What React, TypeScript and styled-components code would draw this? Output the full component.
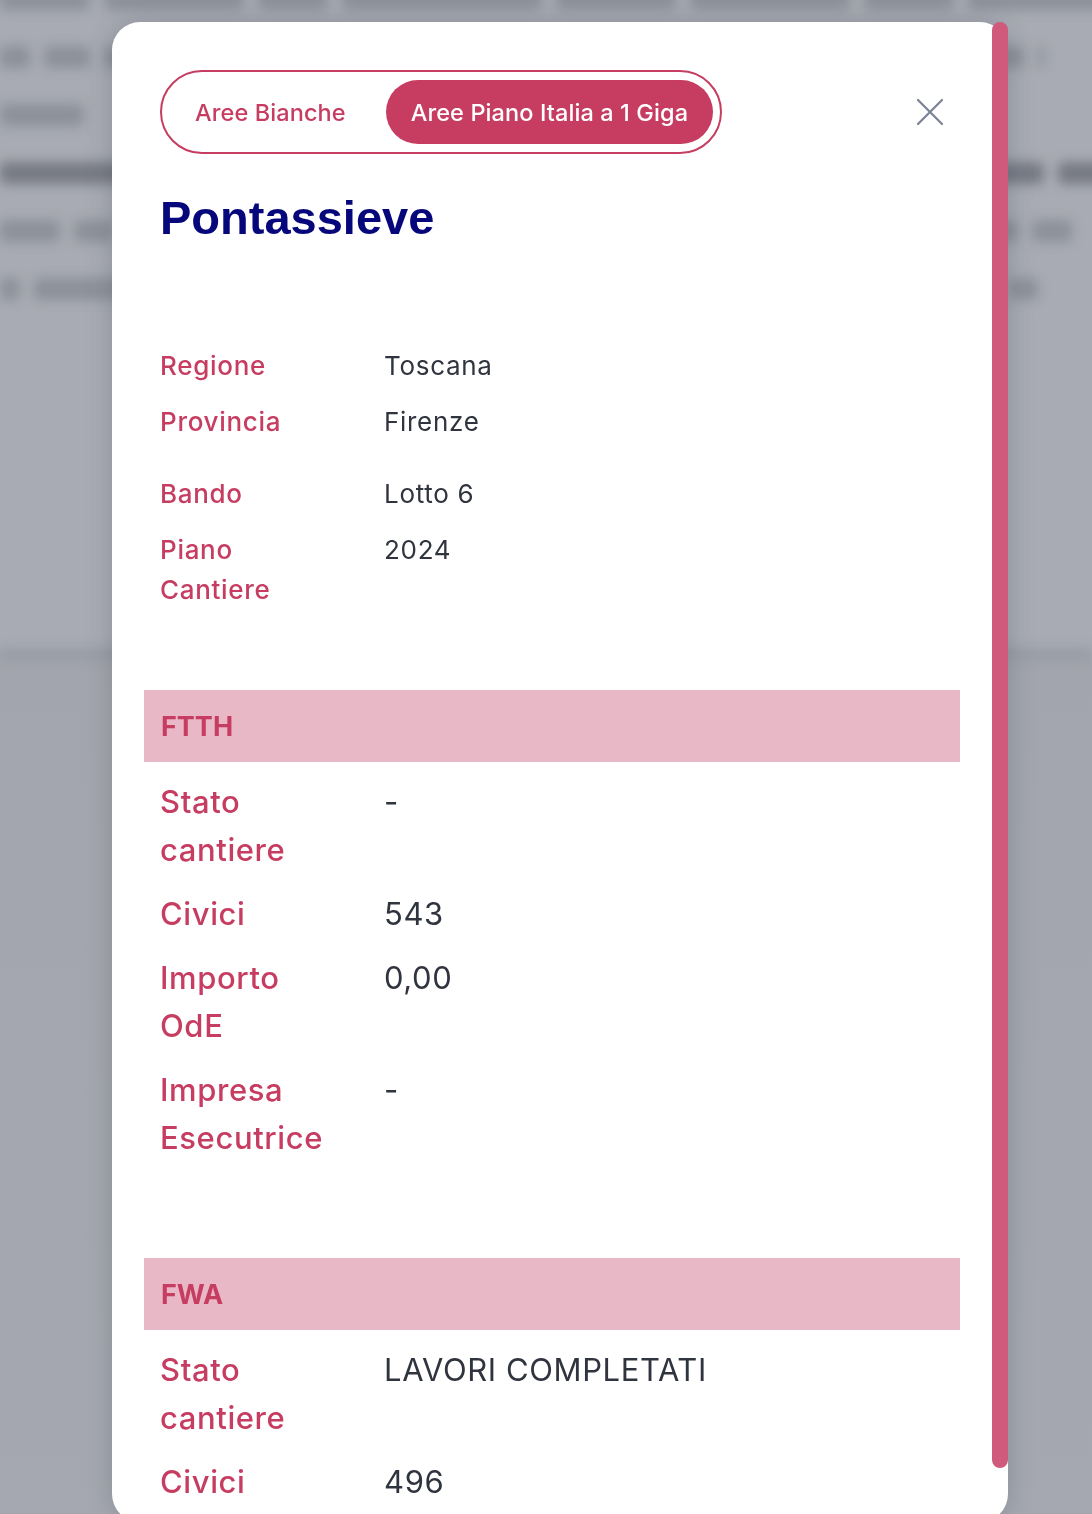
import React from "react";
import styled, { createGlobalStyle } from "styled-components";

const GlobalStyle = createGlobalStyle`
  html, body {
    margin: 0;
    padding: 0;
    background: #a6a9b1;
  }
  * { box-sizing: border-box; }
`;

const Page = styled.div`
  position: relative;
  width: 1092px;
  height: 1514px;
  overflow: hidden;
  background: linear-gradient(#a8abb3 0px, #a8abb3 645px, #a2a5ad 665px, #a5a8b0 100%);
  font-family: Inter, "Noto Sans", sans-serif;
`;

const Backdrop = styled.div`
  position: absolute;
  inset: 0;
  filter: blur(6px);
  pointer-events: none;
  display: flex;
  flex-direction: column;
`;

const BackdropLines = styled.div`
  display: flex;
  flex-direction: column;
  gap: 36px;
  margin-top: -12px;
  height: 660px;
`;

const BackdropLine = styled.div`
  display: flex;
  gap: 14px;
  height: 22px;
`;

const BackdropWord = styled.div<{ $w: number; $dark?: boolean }>`
  flex: none;
  width: ${(p) => p.$w}px;
  height: 100%;
  border-radius: 6px;
  background: ${(p) => (p.$dark ? "#565a64" : "#6d717b")};
  opacity: ${(p) => (p.$dark ? 0.6 : 0.45)};
`;

const BackdropRule = styled.div`
  height: 12px;
  background: #8d919b;
  opacity: 0.55;
`;

const ModalWrap = styled.div`
  position: relative;
  margin-left: 112px;
  padding-top: 22px;
  width: 896px;
`;

const Panel = styled.div`
  background: #ffffff;
  border-radius: 28px;
  height: 1500px;
  padding: 48px 48px 0 32px;
  overflow: hidden;
  box-shadow: 0 0 24px rgba(60, 64, 80, 0.25);
`;

const ScrollThumb = styled.div`
  position: absolute;
  right: 0;
  top: 22px;
  width: 16px;
  height: 1446px;
  border-radius: 8px;
  background: #cf5a7b;
`;

const Header = styled.div`
  display: flex;
  align-items: center;
  justify-content: space-between;
  padding-left: 16px;
`;

const TabGroup = styled.div`
  display: inline-flex;
  align-items: center;
  gap: 15px;
  height: 84px;
  padding: 0 7px 0 8px;
  border: 2px solid #c63d61;
  border-radius: 42px;
`;

const Tab = styled.button<{ $active?: boolean }>`
  height: 64px;
  padding: 0 25px;
  border: none;
  border-radius: 32px;
  font-family: Inter, "Noto Sans", sans-serif;
  font-size: 23.5px;
  font-weight: 500;
  letter-spacing: 0.1px;
  white-space: nowrap;
  cursor: pointer;
  background: ${(p) => (p.$active ? "#c63d61" : "transparent")};
  color: ${(p) => (p.$active ? "#ffffff" : "#c63d61")};
`;

const CloseButton = styled.button`
  width: 44px;
  height: 44px;
  margin-right: 8px;
  padding: 0;
  border: none;
  background: transparent;
  display: flex;
  align-items: center;
  justify-content: center;
  cursor: pointer;
`;

const Title = styled.h1`
  margin: 36px 0 0 16px;
  font-family: "Liberation Sans", Arial, sans-serif;
  font-weight: 700;
  font-size: 47px;
  line-height: 56px;
  color: #07077c;
`;

const InfoBlock = styled.div`
  margin-top: 100px;
  padding-left: 16px;
  display: flex;
  flex-direction: column;
  gap: 32px;
`;

const Group = styled.div`
  display: flex;
  flex-direction: column;
  gap: 16px;
`;

const Row = styled.div<{ $size: number; $lh: number; $ls: number }>`
  display: grid;
  grid-template-columns: 224px 1fr;
  font-size: ${(p) => p.$size}px;
  line-height: ${(p) => p.$lh}px;
  letter-spacing: ${(p) => p.$ls}px;
`;

const Label = styled.div`
  max-width: 165px;
  color: #c63d61;
  font-weight: 500;
`;

const Value = styled.div`
  color: #30343f;
  font-weight: 400;
`;

const Band = styled.div<{ $top: number }>`
  margin-top: ${(p) => p.$top}px;
  height: 72px;
  padding-left: 17px;
  display: flex;
  align-items: center;
  background: #e8b8c6;
  color: #c63d61;
  font-size: 27px;
  font-weight: 700;
`;

const SectionRows = styled.div`
  padding: 16px 0 0 16px;
  display: flex;
  flex-direction: column;
  gap: 16px;
`;

type Item = { label: string; value: string };

const top1: Item[] = [
  { label: "Regione", value: "Toscana" },
  { label: "Provincia", value: "Firenze" },
];
const top2: Item[] = [
  { label: "Bando", value: "Lotto 6" },
  { label: "Piano Cantiere", value: "2024" },
];
const ftth: Item[] = [
  { label: "Stato cantiere", value: "-" },
  { label: "Civici", value: "543" },
  { label: "Importo OdE", value: "0,00" },
  { label: "Impresa Esecutrice", value: "-" },
];
const fwa: Item[] = [
  { label: "Stato cantiere", value: "LAVORI COMPLETATI" },
  { label: "Civici", value: "496" },
];

const backdropLines: { words: number[]; dark?: boolean }[] = [
  { words: [90, 140, 70, 200, 120, 160, 90, 180] },
  { words: [30, 46, 60, 180, 140, 220, 110, 140, 6] },
  { words: [84] },
  { words: [130, 60, 210, 90, 180, 150, 140, 120], dark: true },
  { words: [60, 40, 90, 170, 200, 120, 130, 110, 40] },
  { words: [20, 110, 160, 140, 190, 150, 140, 30] },
];

const CloseIcon = () => (
  <svg width="28" height="28" viewBox="0 0 28 28" fill="none">
    <path d="M2 2 L26 26 M26 2 L2 26" stroke="#7c8196" strokeWidth="2.2" strokeLinecap="round" />
  </svg>
);

const renderRows = (items: Item[], size: number, lh: number, ls: number) =>
  items.map((it) => (
    <Row key={it.label} $size={size} $lh={lh} $ls={ls}>
      <Label>{it.label}</Label>
      <Value>{it.value}</Value>
    </Row>
  ));

export default function App() {
  return (
    <>
      <GlobalStyle />
      <Page>
        <Backdrop aria-hidden>
          <BackdropLines>
            {backdropLines.map((l, i) => (
              <BackdropLine key={i}>
                {l.words.map((w, j) => (
                  <BackdropWord key={j} $w={w} $dark={l.dark} />
                ))}
              </BackdropLine>
            ))}
          </BackdropLines>
          <BackdropRule />
        </Backdrop>
        <ModalWrap>
          <Panel>
            <Header>
              <TabGroup>
                <Tab>Aree Bianche</Tab>
                <Tab $active>Aree Piano Italia a 1 Giga</Tab>
              </TabGroup>
              <CloseButton aria-label="Chiudi">
                <CloseIcon />
              </CloseButton>
            </Header>
            <Title>Pontassieve</Title>
            <InfoBlock>
              <Group>{renderRows(top1, 26, 40, 0.7)}</Group>
              <Group>{renderRows(top2, 26, 40, 0.7)}</Group>
            </InfoBlock>
            <Band $top={80}>FTTH</Band>
            <SectionRows>{renderRows(ftth, 31, 48, 0.6)}</SectionRows>
            <Band $top={96}>FWA</Band>
            <SectionRows>{renderRows(fwa, 31, 48, 0.6)}</SectionRows>
          </Panel>
          <ScrollThumb />
        </ModalWrap>
      </Page>
    </>
  );
}
